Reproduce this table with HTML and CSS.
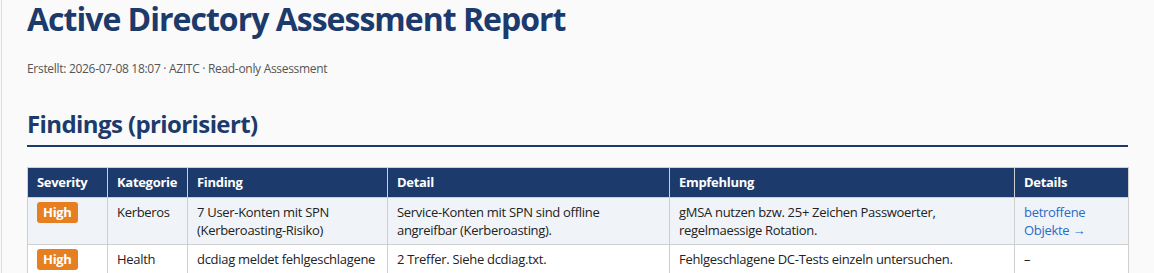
FILE: index.html
```html
<!DOCTYPE html>
<html lang="de">
<head>
<meta charset="utf-8">
<title>Active Directory Assessment Report</title>
<link rel="stylesheet" href="styles.css">
</head>
<body>
<div class="page">
  <h1 class="title">Active Directory Assessment Report</h1>
  <p class="meta">Erstellt: 2026-07-08 18:07 · AZITC · Read-only Assessment</p>
  <h2 class="section-title">Findings (priorisiert)</h2>
  <table class="findings">
    <colgroup>
      <col class="c-sev">
      <col class="c-cat">
      <col class="c-find">
      <col class="c-detail">
      <col class="c-rec">
      <col class="c-links">
    </colgroup>
    <thead>
      <tr>
        <th>Severity</th>
        <th>Kategorie</th>
        <th>Finding</th>
        <th>Detail</th>
        <th>Empfehlung</th>
        <th>Details</th>
      </tr>
    </thead>
    <tbody>
      <tr class="alt">
        <td><span class="badge badge-high">High</span></td>
        <td>Kerberos</td>
        <td>7 User-Konten mit SPN (Kerberoasting-Risiko)</td>
        <td>Service-Konten mit SPN sind offline angreifbar (Kerberoasting).</td>
        <td>gMSA nutzen bzw. 25+ Zeichen Passwoerter, regelmaessige Rotation.</td>
        <td><a class="link" href="#">betroffene Objekte →</a></td>
      </tr>
      <tr>
        <td><span class="badge badge-high">High</span></td>
        <td>Health</td>
        <td>dcdiag meldet fehlgeschlagene Tests</td>
        <td>2 Treffer. Siehe dcdiag.txt.</td>
        <td>Fehlgeschlagene DC-Tests einzeln untersuchen.</td>
        <td>–</td>
      </tr>
    </tbody>
  </table>
</div>
</body>
</html>
```
FILE: styles.css
```css
html, body {
  margin: 0;
  padding: 0;
  background: #fafafa;
}
body {
  padding-left: 1px;
  font-family: "Open Sans", "Noto Sans", sans-serif;
  color: #222;
}
.page {
  border-left: 1px solid #dcdcdc;
  padding: 0 26px 40px 25px;
  min-height: 400px;
}
.title {
  margin: 0;
  font-size: 32px;
  line-height: 38px;
  font-weight: 700;
  color: #1c3a6b;
  letter-spacing: -1px;
}
.meta {
  margin: 23px 0 0;
  font-size: 12px;
  line-height: 16px;
  color: #555;
  letter-spacing: -0.3px;
}
.section-title {
  margin: 31px 0 0;
  padding-bottom: 5px;
  font-size: 24px;
  line-height: 32px;
  font-weight: 700;
  color: #1c3a6b;
  letter-spacing: -0.6px;
  border-bottom: 2px solid #1c3a6b;
}
.findings {
  margin-top: 20px;
  width: 100%;
  border-collapse: collapse;
  table-layout: fixed;
  font-size: 13px;
  line-height: 18px;
  letter-spacing: -0.3px;
}
.c-sev { width: 80px; }
.c-cat { width: 80px; }
.c-find { width: 200px; }
.c-detail { width: 282px; }
.c-rec { width: 345px; }
.c-links { width: 114px; }
.findings th,
.findings td {
  border: 1px solid #cfcfcf;
  padding: 5px 8px 5px 9px;
  text-align: left;
  vertical-align: top;
}
.findings th {
  padding-bottom: 6px;
  background: #1c3a6b;
  color: #fff;
  font-weight: 700;
}
.findings td {
  background: #fff;
  color: #222;
}
.findings tr.alt td {
  background: #f0f4f9;
}
.badge {
  display: inline-block;
  margin: -2px 0;
  padding: 2px 6px;
  border-radius: 3px;
  font-weight: 700;
  color: #fff;
  line-height: 17px;
}
.badge-high {
  background: #e67e22;
}
.link {
  color: #2a6bc9;
  text-decoration: none;
}
```
